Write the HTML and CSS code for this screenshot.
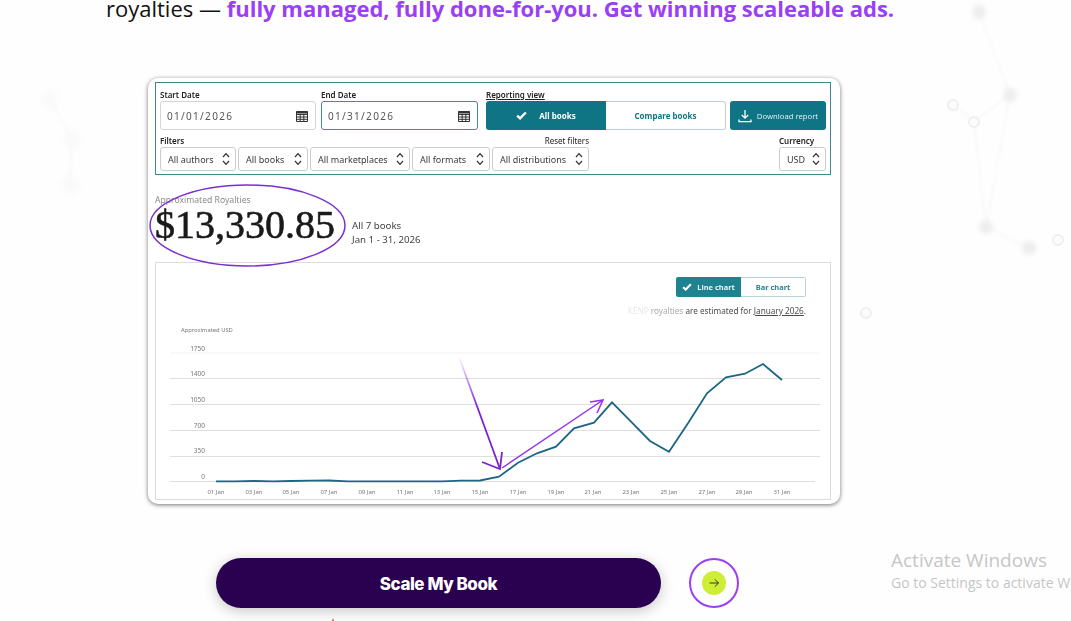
FILE: index.html
```html
<!DOCTYPE html>
<html lang="en">
<head>
    <meta charset="UTF-8">
    <meta name="viewport" content="width=device-width, initial-scale=1.0">
    <title>Scale My Book</title>
    <link rel="stylesheet" href="styles.css">
</head>
<body>
    <!-- Faint network backdrop -->
    <svg class="backdrop" viewBox="0 0 1071 621" aria-hidden="true">
        <g class="backdrop-lines">
            <path d="M979 12 L1010 95 L986 227 L1029 248 M953 105 L974 122 L1010 95 M974 122 L986 227 M50 100 L72 140 L70 185"/>
        </g>
        <g class="backdrop-blobs">
            <circle cx="979" cy="12" r="7"/>
            <circle cx="1010" cy="95" r="7"/>
            <circle cx="986" cy="227" r="7"/>
            <circle cx="1029" cy="248" r="7"/>
        </g>
        <g class="backdrop-blobs left">
            <circle cx="50" cy="100" r="8"/>
            <circle cx="72" cy="140" r="8"/>
            <circle cx="70" cy="185" r="8"/>
        </g>
        <g class="backdrop-rings">
            <circle cx="953" cy="105" r="5"/>
            <circle cx="974" cy="122" r="5"/>
            <circle cx="1058" cy="240" r="5"/>
            <circle cx="866" cy="313" r="5"/>
        </g>
    </svg>

    <svg class="icon-sprite" aria-hidden="true">
        <symbol id="icon-calendar" viewBox="0 0 14 14">
            <path d="M1.5 2.5h11v10h-11z M1.5 5.5h11 M1.5 8h11 M1.5 10.3h11 M5.2 5.5v7 M8.8 5.5v7" fill="none" stroke="#333" stroke-width="1"/>
            <path d="M1.5 2.5h11v2h-11z" fill="#333"/>
        </symbol>
        <symbol id="icon-updown" viewBox="0 0 8 14">
            <path d="M1 5 L4 1.6 L7 5 M1 9 L4 12.4 L7 9" fill="none" stroke="#333" stroke-width="1.2"/>
        </symbol>
        <symbol id="icon-check" viewBox="0 0 12 10">
            <path d="M1.2 5.2 L4.4 8.2 L10.8 1.6" fill="none" stroke="#fff" stroke-width="2.6"/>
        </symbol>
    </svg>

    <p class="headline">royalties — <strong>fully managed, fully done-for-you. Get winning scaleable ads.</strong></p>

    <div class="shot">
        <div class="panel">
            <div class="panel-top">
                <div class="field field-start">
                    <label>Start Date</label>
                    <div class="date-input">
                        <span>01/01/2026</span>
                        <svg class="calendar"><use href="#icon-calendar"/></svg>
                    </div>
                </div>
                <div class="field field-end">
                    <label>End Date</label>
                    <div class="date-input active">
                        <span>01/31/2026</span>
                        <svg class="calendar"><use href="#icon-calendar"/></svg>
                    </div>
                </div>
                <div class="field field-view">
                    <label class="underlined">Reporting view</label>
                    <div class="view-toggle">
                        <div class="view-on"><svg class="check"><use href="#icon-check"/></svg>All books</div>
                        <div class="view-off">Compare books</div>
                    </div>
                </div>
                <div class="download">
                    <svg class="download-icon" viewBox="0 0 14 14">
                        <path d="M7 1v8 M3.8 6 L7 9.2 L10.2 6 M1 10.5v2.2h12v-2.2" fill="none" stroke="#fff" stroke-width="1.3"/>
                    </svg>
                    Download report
                </div>
            </div>
            <div class="panel-bottom">
                <div class="filters">
                    <div class="filters-head">
                        <label>Filters</label>
                        <span class="reset">Reset filters</span>
                    </div>
                    <div class="select-row">
                        <div class="select w-authors">All authors<svg class="updown"><use href="#icon-updown"/></svg></div>
                        <div class="select w-books">All books<svg class="updown"><use href="#icon-updown"/></svg></div>
                        <div class="select w-markets">All marketplaces<svg class="updown"><use href="#icon-updown"/></svg></div>
                        <div class="select w-formats">All formats<svg class="updown"><use href="#icon-updown"/></svg></div>
                        <div class="select w-dist">All distributions<svg class="updown"><use href="#icon-updown"/></svg></div>
                    </div>
                </div>
                <div class="currency">
                    <label>Currency</label>
                    <div class="select w-usd">USD<svg class="updown"><use href="#icon-updown"/></svg></div>
                </div>
            </div>
        </div>

        <div class="summary">
            <div class="summary-main">
                <div class="summary-label">Approximated Royalties</div>
                <div class="summary-value">$13,330.85</div>
            </div>
            <div class="summary-meta">
                <div>All 7 books</div>
                <div>Jan 1 - 31, 2026</div>
            </div>
        </div>

        <div class="chart-box">
            <div class="chart-toggle">
                <div class="chart-on"><svg class="check small"><use href="#icon-check"/></svg>Line chart</div>
                <div class="chart-off">Bar chart</div>
            </div>
            <div class="chart-note"><span class="fade-1">KENP</span> <span class="fade-2">royalties</span> are estimated for <u>January 2026</u>.</div>
            <svg class="chart" viewBox="156 320 674 179">
                <text class="axis-title" x="181" y="332">Approximated USD</text>
                <g class="grid">
                    <path class="grid-faint" d="M170 353H820"/>
                    <path d="M170 378.500H820 M170 404.500H820 M170 430.500H820 M170 456.500H820 M170 481.500H815"/>
                </g>
                <g class="y-labels">
                    <text x="205" y="351">1750</text>
                    <text x="205" y="376">1400</text>
                    <text x="205" y="402">1050</text>
                    <text x="205" y="428">700</text>
                    <text x="205" y="453">350</text>
                    <text x="205" y="479">0</text>
                </g>
                <g class="x-labels">
                    <text x="216" y="494">01 Jan</text>
                    <text x="254" y="494">03 Jan</text>
                    <text x="291" y="494">05 Jan</text>
                    <text x="329" y="494">07 Jan</text>
                    <text x="367" y="494">09 Jan</text>
                    <text x="405" y="494">11 Jan</text>
                    <text x="442" y="494">13 Jan</text>
                    <text x="480" y="494">15 Jan</text>
                    <text x="518" y="494">17 Jan</text>
                    <text x="556" y="494">19 Jan</text>
                    <text x="593" y="494">21 Jan</text>
                    <text x="631" y="494">23 Jan</text>
                    <text x="669" y="494">25 Jan</text>
                    <text x="707" y="494">27 Jan</text>
                    <text x="744" y="494">29 Jan</text>
                    <text x="782" y="494">31 Jan</text>
                </g>
                <polyline class="line" points="216,481.300 235,481.300 254,481 273,481.300 291,481 310,480.700 329,480.500 348,481.300 367,481.300 386,481.300 405,481.300 423,481.300 442,481.300 461,480.700 480,480.500 499,476.700 518,462.700 537,453.300 556,446.700 574,428.300 594,422.700 612,402.300 631,421.700 650,441 669,451.700 688,423.300 707,393.300 726,377.300 745,373.700 763,364 782,380"/>
            </svg>
        </div>

        <!-- Hand drawn marks on top of the screenshot -->
        <svg class="marks" viewBox="148 78 692 426" aria-hidden="true">
            <defs>
                <linearGradient id="arrow-fade" gradientUnits="userSpaceOnUse" x1="459" y1="357" x2="500" y2="469">
                    <stop offset="0" stop-color="#7b22cf" stop-opacity="0"/>
                    <stop offset="0.45" stop-color="#7b22cf"/>
                </linearGradient>
            </defs>
            <ellipse class="ring" cx="247.500" cy="225.500" rx="97.500" ry="40.500"/>
            <path class="arrow-down" d="M459 357 L500 469"/>
            <path class="arrow-down-head" d="M482 462 L500 469 L502 452"/>
            <path class="arrow-up" d="M502 468 L603 400 M590 402 L603 400 L597 413"/>
        </svg>
    </div>

    <div class="cta">
        <button class="cta-button">Scale My Book</button>
        <div class="cta-ring">
            <div class="cta-dot">
                <svg viewBox="0 0 12 12"><path d="M1.500 6H10.500 M6.800 2.300 L10.500 6 L6.800 9.700" fill="none" stroke="#222" stroke-width="0.9"/></svg>
            </div>
        </div>
    </div>

    <p class="cut-line"><span class="rocket"></span>Limited onboarding slots available daily</p>

    <div class="activate">
        <div class="activate-title">Activate Windows</div>
        <div class="activate-sub">Go to Settings to activate Windows.</div>
    </div>
</body>
</html>
```

FILE: styles.css
```css
:root {
    --teal: #0f7585;
    --teal-dark: #1b6683;
    --purple: #9b3ff5;
    --ink: #222;
    --edge: #c9cccc;
}

* {
    margin: 0;
    padding: 0;
    box-sizing: border-box;
}

html, body {
    height: 621px;
    overflow: hidden;
}

body {
    position: relative;
    background: #fefefe;
    color: #111;
    font-family: 'Open Sans', sans-serif;
}

/* Backdrop */
.backdrop {
    position: absolute;
    top: 0;
    left: 0;
    width: 1071px;
    height: 621px;
}

.backdrop-lines path {
    fill: none;
    stroke: #fafafa;
    stroke-width: 3;
    filter: blur(1px);
}

.backdrop-blobs circle {
    fill: #eeeeee;
    filter: blur(2px);
}

.backdrop-blobs.left circle {
    fill: #f9f9f9;
    filter: blur(3px);
}

.backdrop-rings circle {
    fill: #fcfcfc;
    stroke: #efefef;
    stroke-width: 2;
    filter: blur(0.5px);
}

.icon-sprite {
    position: absolute;
    width: 0;
    height: 0;
}

/* Headline */
.headline {
    position: relative;
    margin-top: -8px;
    padding-left: 106px;
    font-size: 22px;
    line-height: 32px;
    white-space: nowrap;
}

.headline strong {
    color: var(--purple);
    font-weight: 700;
}

/* Dashboard screenshot */
.shot {
    position: relative;
    display: flex;
    flex-direction: column;
    width: 692px;
    height: 426px;
    margin: 54px 0 0 148px;
    padding: 4px 9px 4px 7px;
    background: #fff;
    border-radius: 10px;
    box-shadow: 0 1px 4px rgba(0, 0, 0, 0.55);
    font-family: 'Noto Sans', sans-serif;
    color: var(--ink);
}

.panel,
.summary,
.chart-box {
    filter: blur(0.25px);
}

.panel {
    height: 94px;
    padding: 0 4px;
    border: 1px solid #3f8791;
}

.panel label {
    display: block;
    height: 12px;
    font-size: 8px;
    font-weight: 600;
    line-height: 12px;
}

.panel-top {
    display: flex;
    align-items: flex-end;
    padding-top: 6px;
}

.field-start {
    width: 156px;
}

.field-end {
    width: 157px;
    margin-left: 5px;
}

.field-view {
    width: 240px;
    margin-left: 8px;
}

.underlined {
    text-decoration: underline;
}

.date-input {
    display: flex;
    align-items: center;
    justify-content: space-between;
    height: 29px;
    padding: 0 6px;
    border: 1px solid #d3d5d5;
    border-radius: 3px;
    font-size: 10px;
    letter-spacing: 1.3px;
    color: #555;
}

.date-input.active {
    border-color: #3b8f9a;
}

.calendar {
    width: 14px;
    height: 14px;
}

.view-toggle {
    display: flex;
    height: 29px;
    border-radius: 3px;
    font-size: 8px;
    font-weight: 700;
}

.view-on {
    display: flex;
    align-items: center;
    justify-content: center;
    gap: 12px;
    width: 120px;
    background: var(--teal);
    border-radius: 3px 0 0 3px;
    color: #fff;
}

.view-off {
    display: flex;
    align-items: center;
    justify-content: center;
    width: 120px;
    border: 1px solid #bcd3d6;
    border-left: none;
    border-radius: 0 3px 3px 0;
    color: var(--teal);
}

.check {
    width: 11px;
    height: 9px;
}

.check.small {
    width: 10px;
    height: 8px;
}

.download {
    display: flex;
    align-items: center;
    justify-content: center;
    gap: 5px;
    width: 96px;
    height: 29px;
    margin-left: 4px;
    background: var(--teal);
    border-radius: 3px;
    color: #d9ecee;
    font-size: 7.700px;
}

.download-icon {
    width: 14px;
    height: 14px;
}

.panel-bottom {
    display: flex;
    justify-content: space-between;
    margin-top: 5px;
}

.filters {
    width: 429px;
}

.filters-head {
    display: flex;
    justify-content: space-between;
}

.reset {
    font-size: 8px;
    line-height: 11px;
}

.select-row {
    display: flex;
    gap: 2px;
}

.select {
    display: flex;
    align-items: center;
    justify-content: space-between;
    height: 24px;
    padding: 0 5px 0 7px;
    border: 1px solid var(--edge);
    border-radius: 3px;
    font-size: 9px;
    color: #3a3a3a;
    white-space: nowrap;
}

.updown {
    width: 8px;
    height: 14px;
}

.w-authors { width: 76px; }
.w-books { width: 70px; }
.w-markets { width: 100px; }
.w-formats { width: 78px; }
.w-dist { width: 97px; }
.w-usd { width: 47px; }

/* Royalty summary */
.summary {
    display: flex;
    height: 87px;
    padding-top: 19px;
}

.summary-main {
    width: 197px;
}

.summary-label {
    height: 12px;
    font-size: 8.600px;
    line-height: 12px;
    color: #8a8a8a;
}

.summary-value {
    font-family: 'Liberation Serif', serif;
    font-size: 40px;
    line-height: 38px;
    -webkit-text-stroke: 0.6px #1a1a1a;
    color: #1a1a1a;
}

.summary-meta {
    padding-top: 25px;
    font-size: 9.700px;
    line-height: 14px;
    color: #444;
}

/* Chart */
.chart-box {
    flex: 1;
    display: flex;
    flex-direction: column;
    align-items: flex-end;
    padding: 14px 0 0;
    border: 1px solid #dcdcdc;
}

.chart-toggle {
    display: flex;
    height: 20px;
    margin-right: 24px;
    font-size: 7.500px;
    font-weight: 700;
}

.chart-on {
    display: flex;
    align-items: center;
    justify-content: center;
    gap: 5px;
    width: 65px;
    background: #1f8291;
    border-radius: 2px 0 0 2px;
    color: #e6f3f4;
}

.chart-off {
    display: flex;
    align-items: center;
    justify-content: center;
    width: 65px;
    border: 1px solid #bcd3d6;
    border-left: none;
    border-radius: 0 2px 2px 0;
    color: #2d8290;
}

.chart-note {
    height: 15px;
    margin: 6px 24px 0 0;
    font-size: 8.200px;
    line-height: 15px;
    color: #4c4c4c;
}

.fade-1 {
    color: #e8e8e8;
}

.fade-2 {
    color: #a9a9a9;
}

.chart {
    width: 674px;
    height: 179px;
    margin-top: 2px;
}

.axis-title {
    font-size: 5.800px;
    fill: #777;
}

.grid path {
    fill: none;
    stroke: #dfdfdf;
    stroke-width: 1;
}

.grid .grid-faint {
    stroke: #f3f3f3;
}

.y-labels text {
    font-size: 6.500px;
    fill: #777;
    text-anchor: end;
}

.x-labels text {
    font-size: 6px;
    fill: #777;
    text-anchor: middle;
}

.line {
    fill: none;
    stroke: var(--teal-dark);
    stroke-width: 1.800;
}

/* Annotations */
.marks {
    position: absolute;
    top: 0;
    left: 0;
    width: 692px;
    height: 426px;
    pointer-events: none;
}

.marks path,
.marks ellipse {
    fill: none;
}

.ring {
    stroke: #7b2fd0;
    stroke-width: 1.500;
}

.arrow-down {
    stroke: url(#arrow-fade);
    stroke-width: 1.800;
}

.arrow-down-head {
    stroke: #7b22cf;
    stroke-width: 1.800;
}

.arrow-up {
    stroke: #9333ea;
    stroke-width: 1.500;
}

/* Call to action */
.cta {
    position: relative;
    display: flex;
    align-items: center;
    gap: 28px;
    margin: 54px 0 0 216px;
}

.cta-button {
    width: 445px;
    height: 50px;
    padding-top: 1px;
    border: none;
    border-radius: 25px;
    background: #2a0050;
    box-shadow: 0 3px 14px rgba(0, 0, 0, 0.22);
    color: #fff;
    font-family: Inter, sans-serif;
    font-size: 17px;
    font-weight: 800;
    letter-spacing: -0.45px;
}

.cta-ring {
    display: flex;
    align-items: center;
    justify-content: center;
    width: 50px;
    height: 50px;
    border: 2px solid var(--purple);
    border-radius: 50%;
}

.cta-dot {
    display: flex;
    align-items: center;
    justify-content: center;
    width: 24px;
    height: 24px;
    background: #cdee34;
    border-radius: 50%;
}

.cta-dot svg {
    width: 12px;
    height: 12px;
}

/* Line cut off by the window */
.cut-line {
    position: relative;
    display: flex;
    gap: 6px;
    margin: 9px 0 0 328px;
    font-size: 16px;
    line-height: 20px;
    color: #222;
    white-space: nowrap;
}

.rocket {
    width: 0;
    height: 0;
    margin-top: 1px;
    border: 5px solid transparent;
    border-top: none;
    border-bottom: 14px solid #f0493e;
}

/* Windows watermark */
.activate {
    position: absolute;
    top: 548px;
    left: 891px;
    width: 180px;
    overflow: hidden;
    color: #c6c6c6;
    white-space: nowrap;
    font-family: 'Open Sans', sans-serif;
}

.activate-title {
    font-size: 19px;
    line-height: 24px;
}

.activate-sub {
    padding-top: 1px;
    font-size: 14px;
    line-height: 20px;
}
```
